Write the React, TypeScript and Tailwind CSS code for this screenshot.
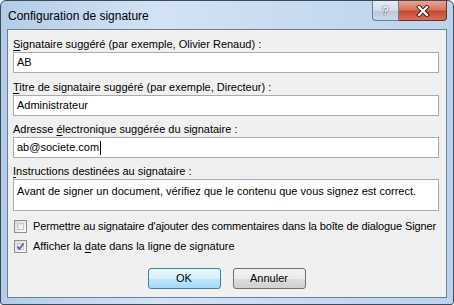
import React from "react";

const font = { fontFamily: '"Liberation Sans", Arial, sans-serif' };

function Label({ children }: { children: React.ReactNode }) {
  return <div className="h-[16px] leading-[16px] text-[11px] text-black">{children}</div>;
}

function Field({ value, caret }: { value: string; caret?: boolean }) {
  return (
    <div className="flex h-[21px] w-[426px] items-center border border-[#a7acb3] bg-white pl-[3px] text-[11px] text-black">
      <span>{value}</span>
      {caret && <span className="ml-[1px] h-[14px] w-px bg-black" />}
    </div>
  );
}

function Check({ checked }: { checked?: boolean }) {
  return (
    <div className="relative h-[13px] w-[13px] shrink-0 border border-[#8e8f8f] bg-[linear-gradient(135deg,#dcdcdc,#fbfbfb)]">
      <div className="absolute inset-[2px] border border-[#c6c6c6] bg-[linear-gradient(135deg,#e2e2e2,#f8f8f8)]" />
      {checked && (
        <svg className="absolute left-[1px] top-[1px]" width="9" height="9" viewBox="0 0 9 9">
          <path d="M1.5 4.5 L3.5 7 L7.5 1.5" fill="none" stroke="#4a5f97" strokeWidth="1.6" />
        </svg>
      )}
    </div>
  );
}

function Button({ children, primary }: { children: React.ReactNode; primary?: boolean }) {
  return (
    <div
      className={`flex h-[21px] w-[73px] items-center justify-center rounded-[3px] border text-[11px] text-black ${
        primary
          ? "border-[#3c7fb1] bg-[linear-gradient(#eaf6fd_0%,#d9f0fc_50%,#bee6fd_51%,#a7d9f5_100%)]"
          : "border-[#707070] bg-[linear-gradient(#f2f2f2_0%,#ebebeb_50%,#dddddd_51%,#cfcfcf_100%)]"
      }`}
    >
      {children}
    </div>
  );
}

export default function App() {
  return (
    <div style={font} className="h-[305px] w-[454px] bg-white">
      <div className="flex h-[305px] w-[454px] flex-col rounded-t-[6px] rounded-b-[3px] border border-[#3d4a57] bg-[linear-gradient(90deg,#b4cce8_0%,#d3e3f5_35%,#c9dcf1_60%,#bcd3ee_100%)]">
        <div className="flex h-[28px] shrink-0 items-start">
          <div className="pl-[7px] pt-[7px] text-[12px] leading-[16px] text-black">Configuration de signature</div>
          <div className="ml-auto mr-[6px] flex">
            <div className="flex h-[20px] w-[27px] items-center justify-center rounded-bl-[4px] border border-t-0 border-[#6d7c8e] bg-[linear-gradient(#e4ecf5_0%,#d2dded_50%,#b9c9dc_51%,#c9d8ea_100%)] text-[12px] font-bold leading-none text-white [text-shadow:0_0_1px_#333,0_0_1px_#333]">
              ?
            </div>
            <div className="flex h-[20px] w-[48px] items-center justify-center rounded-br-[4px] border border-l-0 border-t-0 border-[#6b2b22] bg-[linear-gradient(#e8a493_0%,#d9765f_45%,#c64a32_55%,#d7705a_100%)]">
              <svg width="14" height="12" viewBox="0 0 14 12">
                <path d="M3 2 L11 10 M11 2 L3 10" stroke="#3b1b14" strokeWidth="4" strokeLinecap="square" />
                <path d="M3 2 L11 10 M11 2 L3 10" stroke="#ffffff" strokeWidth="2.2" strokeLinecap="square" />
              </svg>
            </div>
          </div>
        </div>
        <div className="mb-[6px] ml-[6px] mr-[6px] flex flex-1 flex-col border border-[#6f7f90] bg-[#f0f0f0] pl-[5px] pt-[6px]">
          <Label>
            <u className="underline-offset-2">S</u>ignataire suggéré (par exemple, Olivier Renaud) :
          </Label>
          <Field value="AB" />
          <div className="mt-[6px]" />
          <Label>
            <u className="underline-offset-2">T</u>itre de signataire suggéré (par exemple, Directeur) :
          </Label>
          <Field value="Administrateur" />
          <div className="mt-[5px]" />
          <Label>
            Adresse <u className="underline-offset-2">é</u>lectronique suggérée du signataire :
          </Label>
          <Field value="ab@societe.com" caret />
          <div className="mt-[5px]" />
          <Label>
            <u className="underline-offset-2">I</u>nstructions destinées au signataire :
          </Label>
          <div className="h-[32px] w-[426px] border border-[#a7acb3] bg-white pl-[3px] pt-[3px] text-[11px] leading-[16px] text-black">
            Avant de signer un document, vérifiez que le contenu que vous signez est correct.
          </div>
          <div className="mt-[7px] flex items-center gap-[6px] pl-[1px]">
            <Check />
            <span className="text-[11px] leading-[16px] tracking-[-0.12px] text-black">
              Permettre au signataire d'ajouter des commentaires dans la boîte de dialogue Signer
            </span>
          </div>
          <div className="mt-[4px] flex items-center gap-[6px] pl-[1px]">
            <Check checked />
            <span className="text-[11px] leading-[16px] text-black">
              Afficher la <u className="underline-offset-2">d</u>ate dans la ligne de signature
            </span>
          </div>
          <div className="mt-[14px] flex justify-center gap-[12px] pr-[6px]">
            <Button primary>OK</Button>
            <Button>Annuler</Button>
          </div>
        </div>
      </div>
    </div>
  );
}
